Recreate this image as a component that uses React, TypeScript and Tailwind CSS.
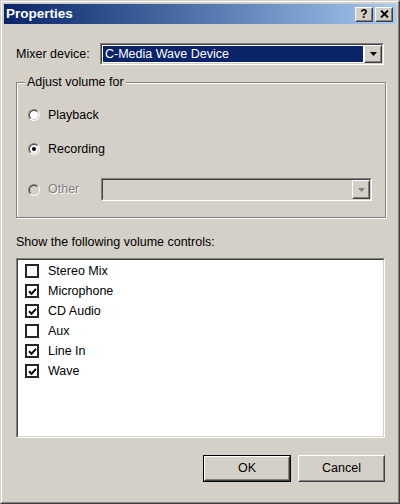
import React from "react";

const items = [
  { label: "Stereo Mix", checked: false },
  { label: "Microphone", checked: true },
  { label: "CD Audio", checked: true },
  { label: "Aux", checked: false },
  { label: "Line In", checked: true },
  { label: "Wave", checked: true },
];

function Sunken({ className = "", inner = "", children }: { className?: string; inner?: string; children?: React.ReactNode }) {
  return (
    <div className={`border border-t-[#808080] border-l-[#808080] border-r-white border-b-white ${className}`}>
      <div className={`h-full border border-t-[#404040] border-l-[#404040] border-r-[#d4d0c8] border-b-[#d4d0c8] ${inner}`}>
        {children}
      </div>
    </div>
  );
}

function Raised({ className = "", children }: { className?: string; children?: React.ReactNode }) {
  return (
    <div className={`border border-t-white border-l-white border-r-[#404040] border-b-[#404040] bg-[#d4d0c8] ${className}`}>
      <div className="flex h-full w-full items-center justify-center border border-t-[#d4d0c8] border-l-[#d4d0c8] border-r-[#808080] border-b-[#808080]">
        {children}
      </div>
    </div>
  );
}

function ComboBox({ value, disabled, className = "" }: { value?: string; disabled?: boolean; className?: string }) {
  return (
    <Sunken className={className} inner={`flex ${disabled ? "bg-[#d4d0c8]" : "bg-white"}`}>
      <div className="flex flex-1 p-[1px]">
        {value && (
          <div className="flex flex-1 items-center bg-[#0a246a] pl-[2px] text-white">{value}</div>
        )}
      </div>
      <Raised className="w-[18px]">
        <svg width="7" height="4" viewBox="0 0 7 4">
          <polygon points="0,0 7,0 3.5,4" fill={disabled ? "#808080" : "#000"} />
        </svg>
      </Raised>
    </Sunken>
  );
}

function Radio({ checked, disabled }: { checked?: boolean; disabled?: boolean }) {
  return (
    <span className="flex h-[12px] w-[12px] shrink-0 rounded-full border border-t-[#808080] border-l-[#808080] border-r-white border-b-white">
      <span
        className={`flex flex-1 items-center justify-center rounded-full border border-t-[#404040] border-l-[#404040] border-r-[#d4d0c8] border-b-[#d4d0c8] ${
          disabled ? "bg-[#d4d0c8]" : "bg-white"
        }`}
      >
        {checked && <span className="h-[4px] w-[4px] rounded-full bg-black" />}
      </span>
    </span>
  );
}

function CheckBox({ checked }: { checked?: boolean }) {
  return (
    <span className="flex h-[14px] w-[14px] shrink-0 items-center justify-center border-2 border-[#262626] bg-white">
      {checked && (
        <svg width="9" height="9" viewBox="0 0 9 9">
          <path d="M1 4.2 L3.5 6.8 L8 1.8" stroke="#000" strokeWidth="2" fill="none" />
        </svg>
      )}
    </span>
  );
}

export default function App() {
  return (
    <div className="h-[504px] w-[400px] border border-t-[#d4d0c8] border-l-[#d4d0c8] border-r-[#404040] border-b-[#404040] bg-[#d4d0c8] font-['Liberation_Sans',Arial,sans-serif] text-[12.5px] text-black">
      <div className="flex h-full flex-col border border-t-white border-l-white border-r-[#808080] border-b-[#808080] p-[2px]">
        {/* Title bar */}
        <div className="flex h-[20px] items-center bg-gradient-to-r from-[#0a246a] to-[#a6caf0] pl-[2px] pr-[3px]">
          <span className="flex-1 text-[13.5px] font-bold text-white">Properties</span>
          <Raised className="h-[15px] w-[18px]">
            <span className="text-[12px] font-bold leading-none">?</span>
          </Raised>
          <Raised className="ml-[2px] h-[15px] w-[18px]">
            <svg width="9" height="8" viewBox="0 0 9 8">
              <path d="M1 0.5 L8 7.5 M8 0.5 L1 7.5" stroke="#000" strokeWidth="1.8" />
            </svg>
          </Raised>
        </div>

        <div className="flex flex-col pl-[12px] pr-[10px]">
          {/* Mixer device */}
          <div className="mt-[19px] flex h-[22px] items-center">
            <span className="w-[84px]">Mixer device:</span>
            <ComboBox value="C-Media Wave Device" className="h-[22px] w-[284px]" />
          </div>

          {/* Adjust volume for */}
          <div className="relative mt-[17px] h-[136px] border border-[#808080] pl-[11px] pt-[24px] shadow-[inset_1px_1px_0_#fff,1px_1px_0_#fff]">
            <span className="absolute left-[8px] top-[-9px] bg-[#d4d0c8] px-[2px] leading-[16px]">Adjust volume for</span>
            <div className="flex h-[16px] items-center gap-[8px]">
              <Radio />
              <span>Playback</span>
            </div>
            <div className="mt-[18px] flex h-[16px] items-center gap-[8px]">
              <Radio checked />
              <span>Recording</span>
            </div>
            <div className="mt-[21px] flex h-[23px] items-center">
              <Radio disabled />
              <span className="ml-[8px] w-[53px] text-[#808080] [text-shadow:1px_1px_0_#fff]">Other</span>
              <ComboBox disabled className="h-[23px] w-[271px]" />
            </div>
          </div>

          {/* Volume controls */}
          <div className="mt-[16px] leading-[16px]">Show the following volume controls:</div>
          <Sunken className="mt-[8px] mr-[1px] h-[180px]" inner="bg-white pt-[1px]">
            {items.map((item) => (
              <div key={item.label} className="flex h-[20px] items-center pl-[7px]">
                <CheckBox checked={item.checked} />
                <span className="ml-[9px]">{item.label}</span>
              </div>
            ))}
          </Sunken>

          {/* Buttons */}
          <div className="mt-[17px] flex justify-end gap-[7px] pr-[1px]">
            <div className="h-[27px] w-[88px] border border-black">
              <Raised className="h-full w-full">OK</Raised>
            </div>
            <Raised className="h-[27px] w-[87px]">Cancel</Raised>
          </div>
        </div>
      </div>
    </div>
  );
}
